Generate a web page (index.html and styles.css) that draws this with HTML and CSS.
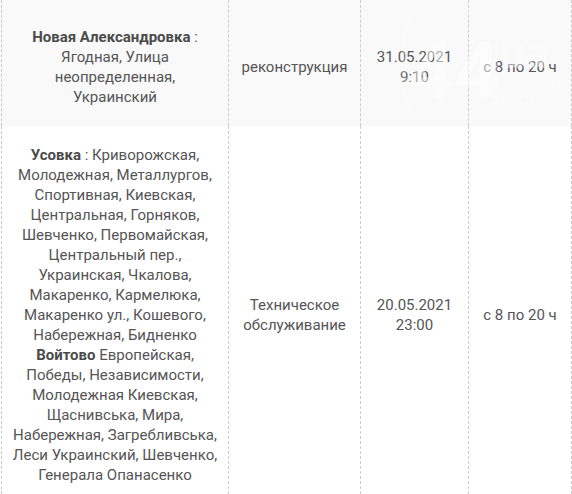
FILE: index.html
```html
<!DOCTYPE html>
<html lang="ru">
<head>
<meta charset="utf-8">
<link rel="stylesheet" href="styles.css">
</head>
<body>
<div class="table">
  <div class="row row-alt">
    <div class="cell"><div><b>Новая Александровка</b> : Ягодная, Улица неопределенная, Украинский</div></div>
    <div class="cell"><div>реконструкция</div></div>
    <div class="cell"><div>31.05.2021<br>9:10</div></div>
    <div class="cell cell-last"><div>с 8 по 20 ч</div></div>
  </div>
  <div class="row">
    <div class="cell"><div><b>Усовка</b> : Криворожская, Молодежная, Металлургов, Спортивная, Киевская, Центральная, Горняков, Шевченко, Первомайская, Центральный пер., Украинская, Чкалова, Макаренко, Кармелюка, Макаренко ул., Кошевого, Набережная, Бидненко <b>Войтово</b> Европейская, Победы, Независимости, Молодежная Киевская, Щаснивська, Мира, Набережная, Загребливська, Леси Украинский, Шевченко, Генерала Опанасенко</div></div>
    <div class="cell"><div>Техническое обслуживание</div></div>
    <div class="cell"><div>20.05.2021<br>23:00</div></div>
    <div class="cell cell-last"><div>с 8 по 20 ч</div></div>
  </div>
  <svg class="watermark" width="180" height="120" viewBox="0 0 180 120" aria-hidden="true">
    <rect x="8" y="6" width="92" height="104" rx="22" fill="none" stroke="#fff" stroke-width="5" opacity="0.25"/>
    <text x="12" y="92" font-family="Roboto, sans-serif" font-weight="700" font-size="80" fill="#fff" opacity="0.5">44</text>
    <text x="104" y="62" font-family="Roboto, sans-serif" font-weight="700" font-size="44" fill="#fff" opacity="0.45">ua</text>
    <text x="96" y="82" font-family="Roboto, sans-serif" font-size="14" fill="#fff" opacity="0.45">Зеленская</text>
    <text x="96" y="98" font-family="Roboto, sans-serif" font-size="14" fill="#fff" opacity="0.45">Власть</text>
  </svg>
</div>
</body>
</html>
```

FILE: styles.css
```css
html, body {
  margin: 0;
  padding: 0;
  background: #fff;
}
body {
  font-family: Roboto, "Noto Sans", sans-serif;
  font-size: 15px;
  line-height: 20px;
  color: #555;
}
.table {
  position: relative;
  width: 572px;
  box-shadow: inset 0 7px 6px -5px rgba(0, 0, 0, 0.12);
}
.row {
  display: grid;
  grid-template-columns: 227px 132px 108px 104px;
  padding-left: 1px;
}
.row-alt {
  background: #f9f9f9;
}
.row-alt .cell {
  padding-top: 27px;
  padding-bottom: 19px;
}
.cell {
  display: flex;
  align-items: center;
  justify-content: center;
  text-align: center;
  padding: 19px 10px;
  border-left: 1px dashed #ccc;
}
.cell-last {
  border-right: 1px dashed #ccc;
}
.cell b {
  font-weight: 700;
  color: #4a4a4a;
}
.watermark {
  position: absolute;
  left: 396px;
  top: 6px;
  pointer-events: none;
}
```
